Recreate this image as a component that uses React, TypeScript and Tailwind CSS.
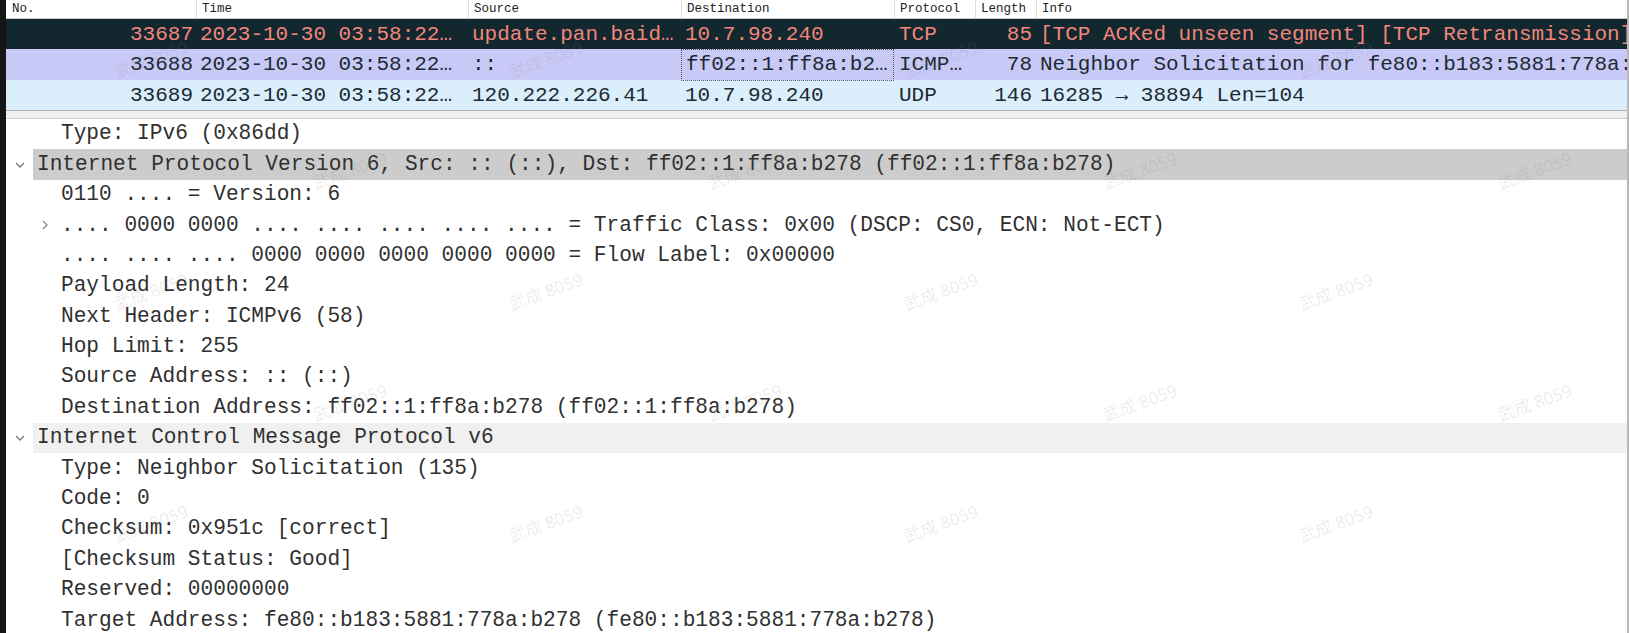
import React from "react";

type Row = {
  no: string;
  time: string;
  src: string;
  dst: string;
  proto: string;
  len: string;
  info: string;
  cls: string;
  focus?: boolean;
};

const rows: Row[] = [
  {
    no: "33687",
    time: "2023-10-30 03:58:22…",
    src: "update.pan.baid…",
    dst: "10.7.98.240",
    proto: "TCP",
    len: "85",
    info: "[TCP ACKed unseen segment] [TCP Retransmission] 443 → 52110 [PSH, ACK] Seq=1 Ack=1",
    cls: "bg-[#12272e] text-[#f0867c]",
  },
  {
    no: "33688",
    time: "2023-10-30 03:58:22…",
    src: "::",
    dst: "ff02::1:ff8a:b2…",
    proto: "ICMP…",
    len: "78",
    info: "Neighbor Solicitation for fe80::b183:5881:778a:b278",
    cls: "bg-[#c9c9f7] text-[#1c2a31]",
    focus: true,
  },
  {
    no: "33689",
    time: "2023-10-30 03:58:22…",
    src: "120.222.226.41",
    dst: "10.7.98.240",
    proto: "UDP",
    len: "146",
    info: "16285 → 38894 Len=104",
    cls: "bg-[#daeefc] text-[#1c2a31]",
  },
];

type Line = {
  text: string;
  top?: boolean;
  expander?: "open" | "closed";
  bg?: string;
};

const lines: Line[] = [
  { text: "Type: IPv6 (0x86dd)" },
  {
    text: "Internet Protocol Version 6, Src: :: (::), Dst: ff02::1:ff8a:b278 (ff02::1:ff8a:b278)",
    top: true,
    expander: "open",
    bg: "bg-[#cccccc]",
  },
  { text: "0110 .... = Version: 6" },
  {
    text: ".... 0000 0000 .... .... .... .... .... = Traffic Class: 0x00 (DSCP: CS0, ECN: Not-ECT)",
    expander: "closed",
  },
  { text: ".... .... .... 0000 0000 0000 0000 0000 = Flow Label: 0x00000" },
  { text: "Payload Length: 24" },
  { text: "Next Header: ICMPv6 (58)" },
  { text: "Hop Limit: 255" },
  { text: "Source Address: :: (::)" },
  { text: "Destination Address: ff02::1:ff8a:b278 (ff02::1:ff8a:b278)" },
  {
    text: "Internet Control Message Protocol v6",
    top: true,
    expander: "open",
    bg: "bg-[#f0f0f0]",
  },
  { text: "Type: Neighbor Solicitation (135)" },
  { text: "Code: 0" },
  { text: "Checksum: 0x951c [correct]" },
  { text: "[Checksum Status: Good]" },
  { text: "Reserved: 00000000" },
  { text: "Target Address: fe80::b183:5881:778a:b278 (fe80::b183:5881:778a:b278)" },
];

const marks: string[] = [
  "left-[106px] top-[48px]",
  "left-[501px] top-[48px]",
  "left-[896px] top-[48px]",
  "left-[1291px] top-[48px]",
  "left-[106px] top-[280px]",
  "left-[501px] top-[280px]",
  "left-[896px] top-[280px]",
  "left-[1291px] top-[280px]",
  "left-[106px] top-[512px]",
  "left-[501px] top-[512px]",
  "left-[896px] top-[512px]",
  "left-[1291px] top-[512px]",
  "left-[-90px] top-[159px]",
  "left-[305px] top-[159px]",
  "left-[700px] top-[159px]",
  "left-[1095px] top-[159px]",
  "left-[1490px] top-[159px]",
  "left-[-90px] top-[391px]",
  "left-[305px] top-[391px]",
  "left-[700px] top-[391px]",
  "left-[1095px] top-[391px]",
  "left-[1490px] top-[391px]",
];

function ChevronDown() {
  return (
    <svg width="10" height="6" viewBox="0 0 10 6">
      <path d="M1 1 L5 5 L9 1" stroke="#7a7a7a" strokeWidth="1.3" fill="none" />
    </svg>
  );
}

function ChevronRight() {
  return (
    <svg width="6" height="10" viewBox="0 0 6 10">
      <path d="M1 1 L5 5 L1 9" stroke="#8a8a8a" strokeWidth="1.3" fill="none" />
    </svg>
  );
}

const gridCols = "grid grid-cols-[190px_272px_213px_213px_81px_61px_1fr]";

export default function App() {
  return (
    <div className="relative w-[1629px] h-[633px] overflow-hidden flex bg-white font-['Liberation_Mono',monospace]">
      <div className="w-[6px] shrink-0 bg-[#151515]" />
      <div className="flex-1 min-w-0 flex flex-col border-r-2 border-[#b8b8b8]">
        {/* header */}
        <div className={`${gridCols} h-[18.5px] shrink-0 border-b border-[#c9c9c9] text-[12.5px] text-[#222] bg-white`}>
          {["No.", "Time", "Source", "Destination", "Protocol", "Length", "Info"].map((h, i) => (
            <div
              key={h}
              className={`flex items-center pb-[2px] ${i === 0 ? "pl-[6px]" : "pl-[5px] border-l border-[#dedede]"}`}
            >
              {h}
            </div>
          ))}
        </div>
        {/* packet rows */}
        <div className="shrink-0 text-[21px] border-b border-[#a9b4bb]">
          {rows.map((r) => (
            <div key={r.no} className={`${gridCols} h-[30.5px] items-center ${r.cls}`}>
              <div className="text-right pr-[3px] whitespace-nowrap">{r.no}</div>
              <div className="pl-[4px] whitespace-nowrap overflow-hidden">{r.time}</div>
              <div className="pl-[4px] whitespace-nowrap overflow-hidden">{r.src}</div>
              <div
                className={`h-full flex items-center pl-[4px] whitespace-nowrap overflow-hidden ${
                  r.focus ? "border border-dotted border-[#555]" : ""
                }`}
              >
                {r.dst}
              </div>
              <div className="pl-[5px] whitespace-nowrap overflow-hidden">{r.proto}</div>
              <div className="text-right pr-[4px] whitespace-nowrap">{r.len}</div>
              <div className="pl-[4px] whitespace-nowrap overflow-hidden">{r.info}</div>
            </div>
          ))}
        </div>
        {/* splitter */}
        <div className="h-[8px] shrink-0 bg-[#f0f0f0] border-b border-[#cdcdcd]" />
        {/* details */}
        <div className="flex-1 min-h-0 overflow-hidden text-[21.15px] text-[#303030] bg-white">
          {lines.map((l, i) =>
            l.top ? (
              <div key={i} className="flex h-[30.4px] items-stretch">
                <div className="w-[27px] shrink-0 flex items-center justify-center pl-[1px]">
                  <ChevronDown />
                </div>
                <div className={`flex-1 min-w-0 flex items-center pl-[4px] whitespace-nowrap overflow-hidden ${l.bg ?? ""}`}>
                  {l.text}
                </div>
              </div>
            ) : (
              <div key={i} className="flex h-[30.4px] items-center">
                <div className="w-[55px] shrink-0 flex items-center justify-end pr-[13px]">
                  {l.expander === "closed" ? <ChevronRight /> : null}
                </div>
                <div className="flex-1 min-w-0 whitespace-nowrap overflow-hidden">{l.text}</div>
              </div>
            )
          )}
        </div>
      </div>
      {/* watermarks */}
      {marks.map((m) => (
        <div
          key={m}
          className={`absolute ${m} w-[90px] h-[24px] flex items-center justify-center pointer-events-none select-none whitespace-nowrap -rotate-[20deg] text-[17px] text-[rgba(135,135,135,0.16)] font-['Noto_Sans','Noto_Sans_CJK_SC',sans-serif]`}
        >
          武成 8059
        </div>
      ))}
    </div>
  );
}
